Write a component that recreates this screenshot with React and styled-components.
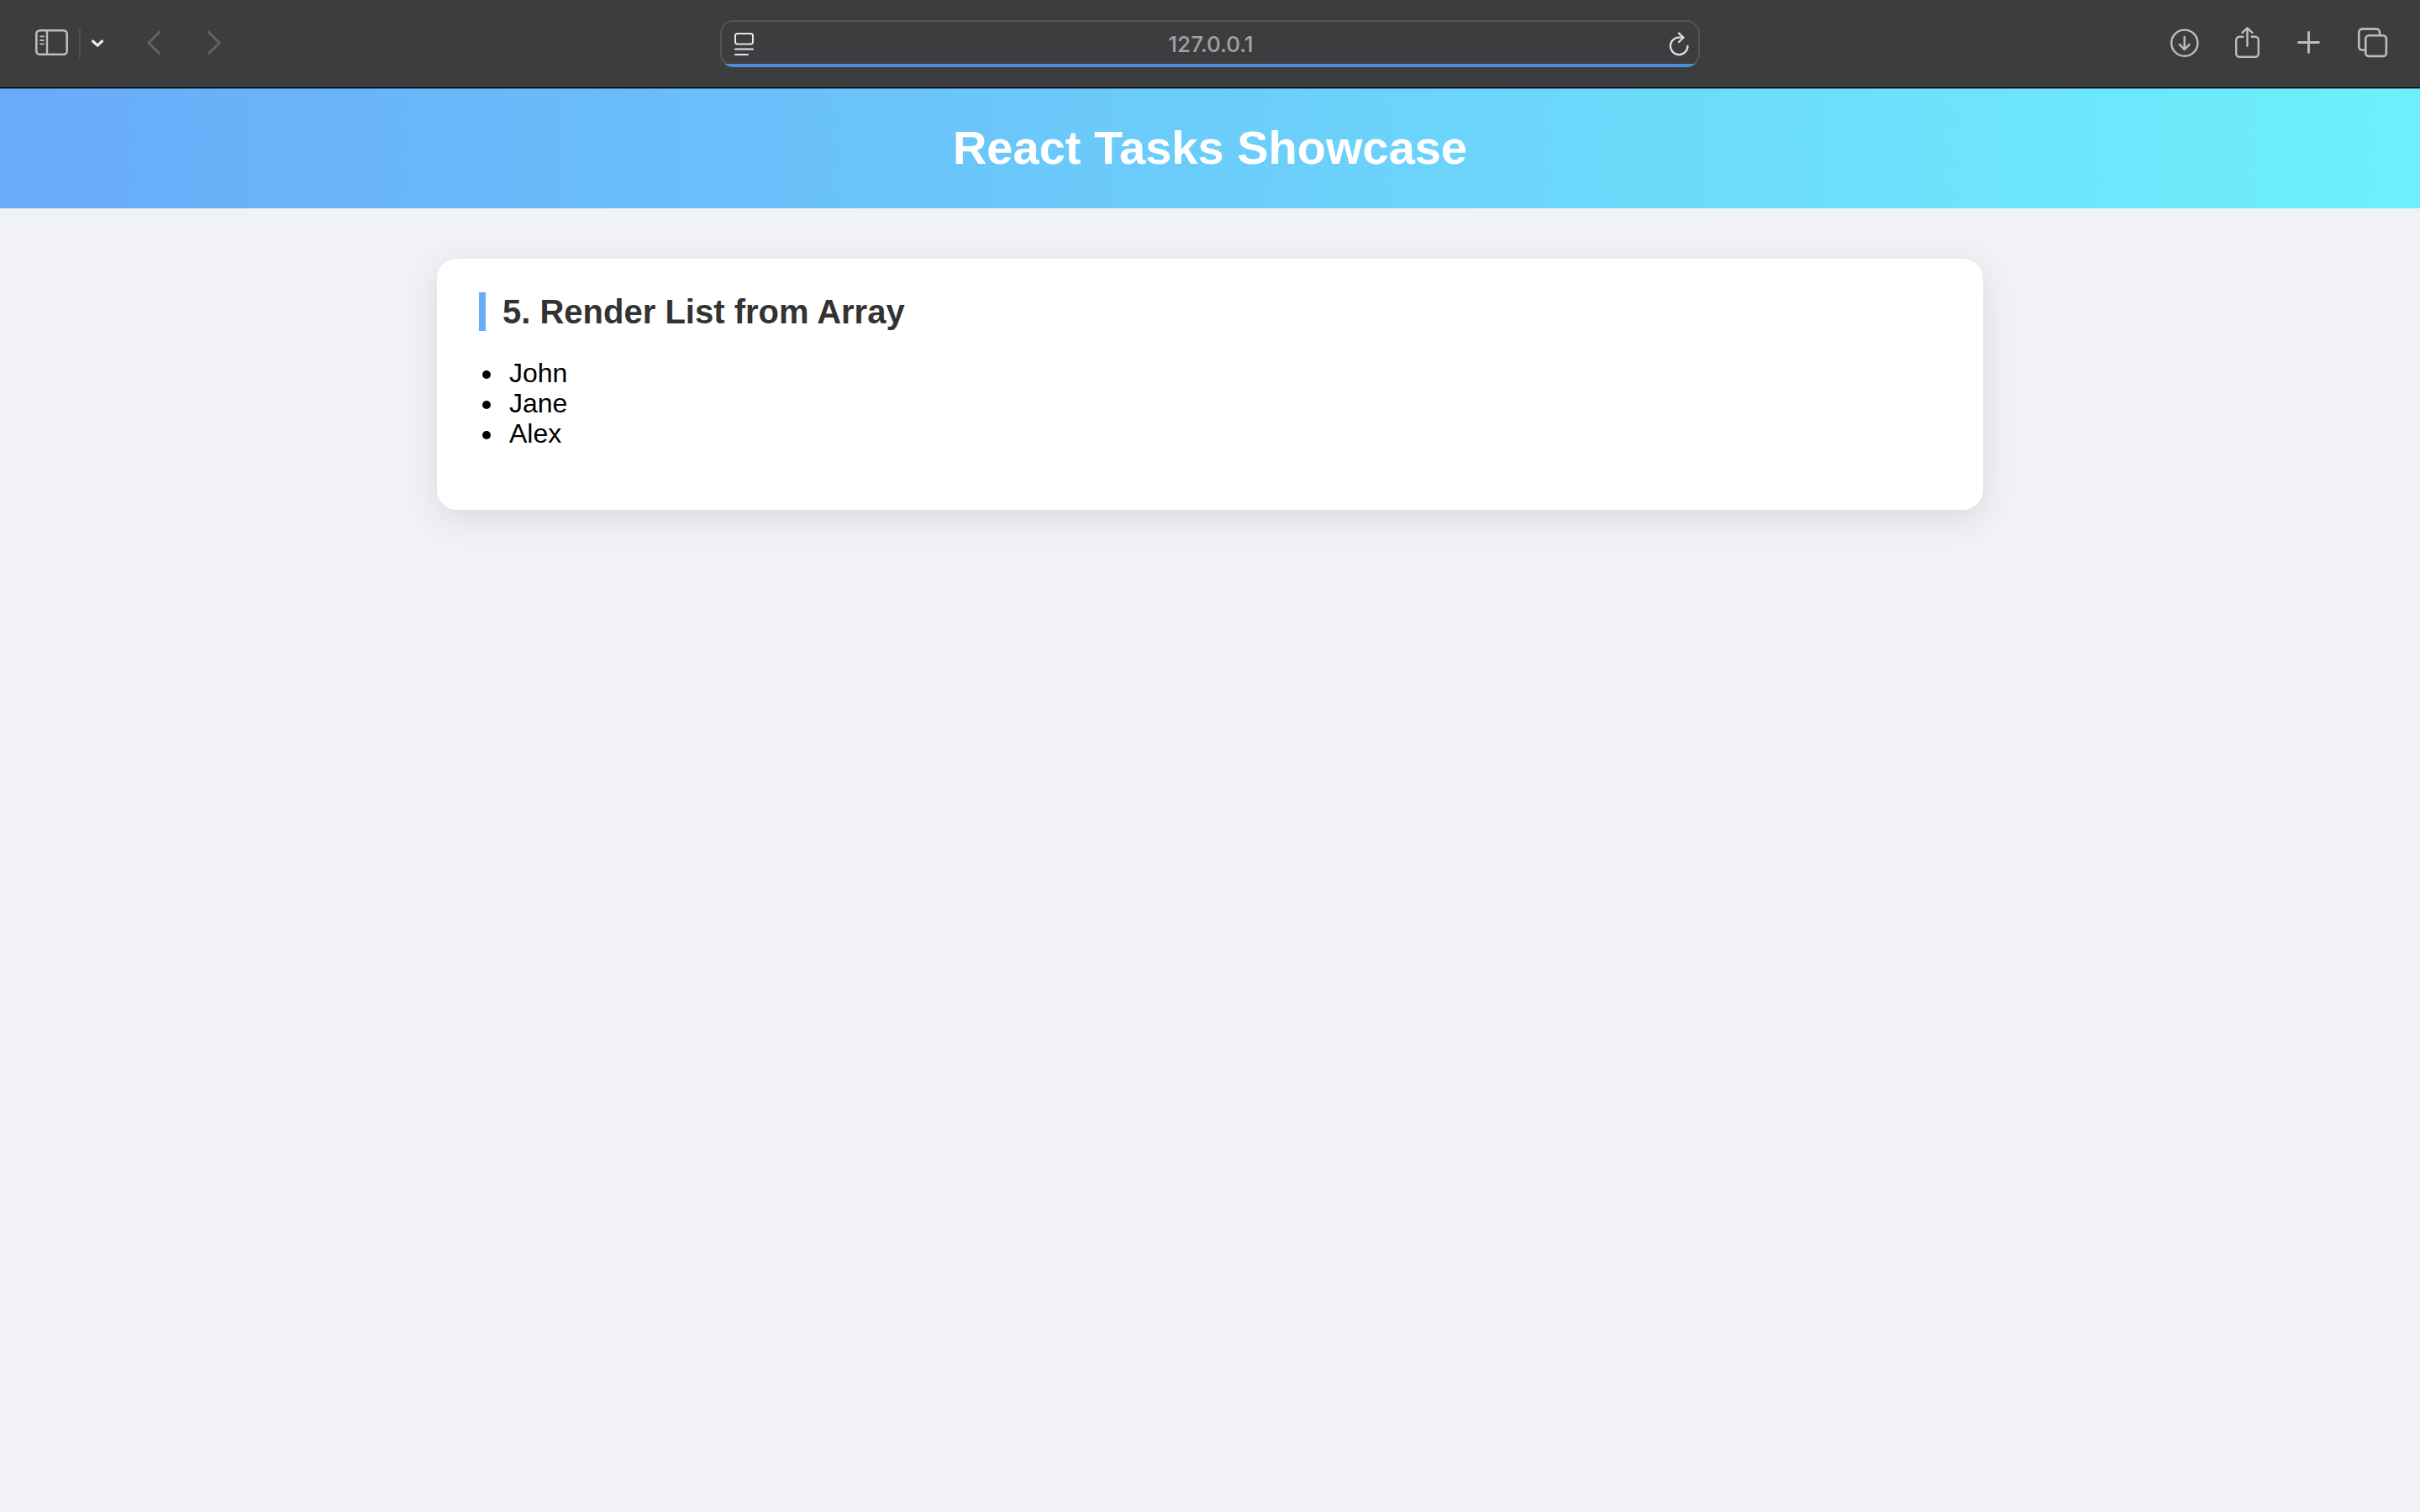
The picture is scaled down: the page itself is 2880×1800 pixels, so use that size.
import React from 'react';
import styled, { createGlobalStyle } from 'styled-components';

const GlobalStyle = createGlobalStyle`
  *, *::before, *::after {
    box-sizing: border-box;
  }

  body {
    margin: 0;
    min-height: 100vh;
    background: #f0f2f6;
    color: #000;
    font-family: Helvetica, "Liberation Sans", Arial, sans-serif;
    font-size: 32px;
    line-height: 36px;
  }
`;

const Toolbar = styled.nav`
  display: grid;
  grid-template-columns: 1fr minmax(0, 1166px) 1fr;
  align-items: center;
  height: 105px;
  padding: 0 36px;
  background: #3c3d3f;
  border-bottom: 1px solid #000;
`;

const ToolGroup = styled.div`
  display: flex;
  align-items: center;
  justify-content: ${(p) => (p.$end ? 'flex-end' : 'flex-start')};
  gap: ${(p) => p.$gap}px;
`;

const SidebarGroup = styled(ToolGroup)`
  padding-left: 6px;
`;

const NavGroup = styled(ToolGroup)`
  margin-left: 36px;
`;

const ToolButton = styled.button`
  display: flex;
  padding: 0;
  border: 0;
  background: none;
  color: ${(p) => p.$tone || '#bcbdbf'};
`;

const Icon = styled.svg`
  display: block;
  width: ${(p) => p.$w}px;
  height: ${(p) => p.$h}px;
  fill: none;
  stroke: currentColor;
  stroke-linecap: round;
  stroke-linejoin: round;
`;

const Divider = styled.span`
  width: 2px;
  height: 36px;
  margin-left: 4px;
  background: #4e4f51;
`;

const AddressBar = styled.form`
  position: relative;
  display: flex;
  align-items: center;
  height: 56px;
  padding: 0 12px 0 14px;
  border-radius: 16px;
  box-shadow: inset 0 0 0 2px #545557;
  overflow: hidden;
`;

const AddressInput = styled.input`
  flex: 1;
  min-width: 0;
  padding: 2px 0 0;
  border: 0;
  outline: 0;
  background: none;
  color: #a1a2a3;
  font: 500 26px/32px Inter, sans-serif;
  text-align: center;
`;

const LoadProgress = styled.div`
  position: absolute;
  inset: auto 0 0;
  height: 4px;
  background: #4e8edb;
`;

const Header = styled.header`
  padding: 37px 40px 39px;
  background: linear-gradient(90deg, #69aaf9, #6df0fc);
  box-shadow: inset 0 1px 0 rgba(0, 0, 0, 0.35);
  color: #fff;
  text-align: center;
`;

const PageTitle = styled.h1`
  margin: 0;
  font-size: 56px;
  line-height: 67px;
`;

const Main = styled.main`
  max-width: 1840px;
  margin: 60px auto;
`;

const Card = styled.section`
  padding: 40px 50px;
  border-radius: 24px;
  background: #fff;
  box-shadow: 0 10px 40px rgba(0, 0, 0, 0.1);
`;

const CardTitle = styled.h2`
  margin: 0;
  padding-left: 20px;
  border-left: 8px solid #69aaf9;
  color: #333;
  font-size: 40px;
  line-height: 46px;
`;

const NameList = styled.ul`
  margin: 32px 0 33px;
  padding: 0 0 0 4px;
  list-style: none;
`;

const NameItem = styled.li`
  display: flex;
  align-items: center;
  gap: 22px;

  &::before {
    content: '';
    width: 10px;
    height: 10px;
    margin-top: 4px;
    border-radius: 50%;
    background: currentColor;
  }
`;

const names = ['John', 'Jane', 'Alex'];

function BrowserToolbar() {
  return (
    <Toolbar aria-label="Browser">
      <SidebarGroup $gap={8}>
        <ToolButton type="button" aria-label="Sidebar">
          <Icon $w={40} $h={40} viewBox="0 0 40 40">
            <rect x="1.3" y="4.3" width="36.4" height="28.4" rx="4" strokeWidth="2.6" />
            <path d="M14 4.5v28" strokeWidth="2.4" />
            <path d="M6 11.4h4M6 16h4M6 20.4h4" strokeWidth="1.8" />
          </Icon>
        </ToolButton>
        <Divider />
        <ToolButton type="button" aria-label="Tab groups" $tone="#e9eaeb">
          <Icon $w={24} $h={40} viewBox="0 0 24 40">
            <path d="M6.5 17l5.5 5.2 5.5-5.2" strokeWidth="3.2" />
          </Icon>
        </ToolButton>
        <NavGroup $gap={48}>
          <ToolButton type="button" aria-label="Back" $tone="#646567">
            <Icon $w={24} $h={40} viewBox="0 0 24 40">
              <path d="M17.7 6.3L4.8 19l12.9 12.7" strokeWidth="2.7" />
            </Icon>
          </ToolButton>
          <ToolButton type="button" aria-label="Forward" $tone="#646567">
            <Icon $w={24} $h={40} viewBox="0 0 24 40">
              <path d="M4.3 6.3L17.2 19 4.3 31.7" strokeWidth="2.7" />
            </Icon>
          </ToolButton>
        </NavGroup>
      </SidebarGroup>

      <AddressBar onSubmit={(e) => e.preventDefault()}>
        <ToolButton type="button" aria-label="Page menu" $tone="#e4e5e6">
          <Icon $w={26} $h={32} viewBox="0 0 26 32">
            <rect x="4" y="4" width="21" height="12.4" rx="2.6" strokeWidth="2" />
            <path d="M4 22.6h21M4 29h15" strokeWidth="2" />
          </Icon>
        </ToolButton>
        <AddressInput aria-label="Address" defaultValue="127.0.0.1" />
        <ToolButton type="button" aria-label="Reload" $tone="#e4e5e6">
          <Icon $w={26} $h={32} viewBox="0 0 26 32">
            <path d="M23.5 18.8A10.3 10.3 0 1 1 13.2 8.5h5" strokeWidth="2.2" />
            <path d="M13 3.6l5.4 5.1-5.4 5.3" strokeWidth="2.2" />
          </Icon>
        </ToolButton>
        <LoadProgress />
      </AddressBar>

      <ToolGroup $gap={34} $end>
        <ToolButton type="button" aria-label="Downloads">
          <Icon $w={40} $h={40} viewBox="0 0 40 40" strokeWidth="2.4">
            <circle cx="17.8" cy="19.2" r="15.6" />
            <path d="M17.7 12v14.6M11.7 20.9l6 6 6-6" />
          </Icon>
        </ToolButton>
        <ToolButton type="button" aria-label="Share">
          <Icon $w={40} $h={40} viewBox="0 0 40 40" strokeWidth="2.4">
            <path d="M13.3 11.7H9.2a4 4 0 0 0-4 4v16a4 4 0 0 0 4 4h18.6a4 4 0 0 0 4-4v-16a4 4 0 0 0-4-4h-4.1" />
            <path d="M18.5 1.6v21.2M12.6 6.9l5.9-5.6 5.9 5.6" />
          </Icon>
        </ToolButton>
        <ToolButton type="button" aria-label="New tab">
          <Icon $w={40} $h={40} viewBox="0 0 40 40" strokeWidth="2.8">
            <path d="M17.5 6.5v24M5.5 18.5h24" />
          </Icon>
        </ToolButton>
        <ToolButton type="button" aria-label="Tab overview">
          <Icon $w={40} $h={40} viewBox="0 0 40 40" strokeWidth="2.6">
            <rect x="11.3" y="10.3" width="24.6" height="24.6" rx="4" />
            <path d="M28 9.5V6.4a4 4 0 0 0-4-4H7.3a4 4 0 0 0-4 4v17.1a4 4 0 0 0 4 4h3" />
          </Icon>
        </ToolButton>
      </ToolGroup>
    </Toolbar>
  );
}

export default function App() {
  return (
    <>
      <GlobalStyle />
      <BrowserToolbar />
      <Header>
        <PageTitle>React Tasks Showcase</PageTitle>
      </Header>
      <Main>
        <Card>
          <CardTitle>5. Render List from Array</CardTitle>
          <NameList>
            {names.map((name) => (
              <NameItem key={name}>{name}</NameItem>
            ))}
          </NameList>
        </Card>
      </Main>
    </>
  );
}
